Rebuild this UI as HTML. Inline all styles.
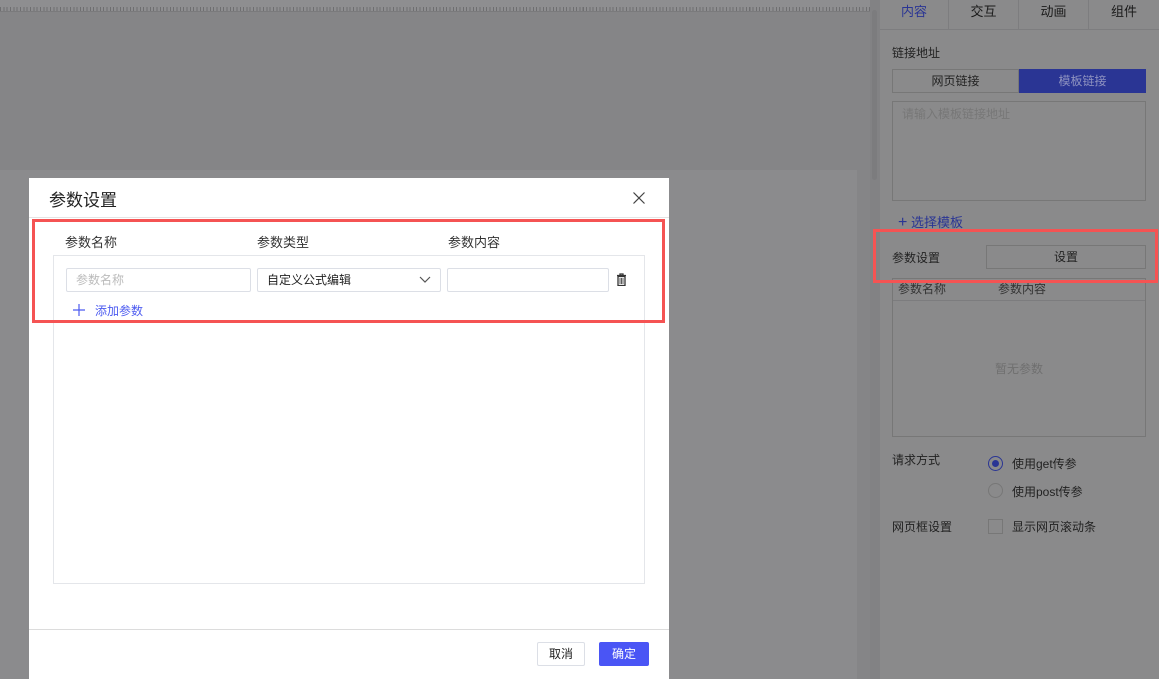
<!DOCTYPE html>
<html><head><meta charset="utf-8"><style>
*{box-sizing:border-box;margin:0;padding:0}
body{width:1159px;height:679px;overflow:hidden;background:#858587;font-family:"Liberation Sans","Noto Sans CJK SC",sans-serif;position:relative;font-size:12px}
.abs{position:absolute}
.ruler{left:0;top:0;width:870px;height:12px;background:#8e8e90;border-bottom:1px solid #7a7a7c;background-image:repeating-linear-gradient(90deg,#6e6e70 0 1px,transparent 1px 3.33px);background-size:100% 5px;background-repeat:repeat-x;background-position:0 7px}
.canvas{left:0;top:170px;width:857px;height:509px;background:#8b8b8d}
.sb{left:870px;top:0;width:10px;height:679px;background:#828284}
.panel{left:880px;top:0;width:279px;height:679px;background:#8a8a8b;color:#222}
.tab{top:0;height:30px;line-height:24px;text-align:center;font-size:13px;color:#1a1a1a;border-right:1px solid #7d7d7f;border-bottom:1px solid #7d7d7f}
.dlg{left:29px;top:178px;width:640px;height:501px;background:#fff}
.inp{height:24px;border:1px solid #dcdfe6;border-radius:2px;top:268px;font-size:12px;line-height:22px;padding-left:9px}
</style></head><body>
<div class="abs ruler"></div>
<div class="abs canvas"></div>
<div class="abs sb"><div class="abs" style="left:2px;top:10px;width:5px;height:170px;background:#7c7c7e;border-radius:3px"></div></div>
<div class="abs panel">
 <div class="abs tab" style="left:0;width:69px;color:#2a3594">内容</div>
 <div class="abs tab" style="left:69px;width:70px">交互</div>
 <div class="abs tab" style="left:139px;width:70px">动画</div>
 <div class="abs tab" style="left:209px;width:70px;border-right:none">组件</div>
 <div class="abs" style="left:12px;top:44px">链接地址</div>
 <div class="abs" style="left:12px;top:69px;width:127px;height:24px;border:1px solid #777;text-align:center;line-height:22px">网页链接</div>
 <div class="abs" style="left:139px;top:69px;width:127px;height:24px;background:#2a3594;color:#8f93c0;text-align:center;line-height:24px">模板链接</div>
 <div class="abs" style="left:12px;top:101px;width:254px;height:100px;border:1px solid #777;padding:3px 9px;color:#777">请输入模板链接地址</div>
 <div class="abs" style="left:18px;top:212px;color:#2a3594;font-size:13px"><span style="font-size:16px">+</span> 选择模板</div>
 <div class="abs" style="left:12px;top:249px">参数设置</div>
 <div class="abs" style="left:106px;top:245px;width:160px;height:24px;border:1px solid #777;text-align:center;line-height:22px">设置</div>
 <div class="abs" style="left:12px;top:278px;width:254px;height:159px;border:1px solid #777"><div style="height:22px;border-bottom:1px solid #7c7c7e;padding-left:5px;line-height:20px;color:#333">参数名称<span style="margin-left:52px">参数内容</span></div><div style="text-align:center;margin-top:59px;color:#6f6f6f">暂无参数</div></div>
 <div class="abs" style="left:12px;top:451px">请求方式</div>
 <div class="abs" style="left:108px;top:456px;width:15px;height:15px;border:1px solid #2a3594;border-radius:50%"><div style="margin:3px;width:7px;height:7px;border-radius:50%;background:#2a3594"></div></div>
 <div class="abs" style="left:132px;top:455px">使用get传参</div>
 <div class="abs" style="left:108px;top:483px;width:15px;height:15px;border:1px solid #777;border-radius:50%"></div>
 <div class="abs" style="left:132px;top:483px">使用post传参</div>
 <div class="abs" style="left:12px;top:518px">网页框设置</div>
 <div class="abs" style="left:108px;top:519px;width:15px;height:15px;border:1px solid #777"></div>
 <div class="abs" style="left:132px;top:518px">显示网页滚动条</div>
</div>
<div class="abs" style="left:873px;top:229px;width:285px;height:54px;border:3px solid #f55353"></div>
<div class="abs dlg">
 <div class="abs" style="left:20px;top:8px;font-size:17px;color:#222">参数设置</div>
 <svg class="abs" style="left:604px;top:14px" width="12" height="12" viewBox="0 0 12 12"><path d="M0.5 0.5l11 11M11.5 0.5l-11 11" stroke="#444" stroke-width="1.2"/></svg>
 <div class="abs" style="left:0;top:39px;width:640px;height:1px;background:#e4e4e4"></div>
 <div class="abs" style="left:36px;top:54px;font-size:13px;color:#333">参数名称</div>
 <div class="abs" style="left:228px;top:54px;font-size:13px;color:#333">参数类型</div>
 <div class="abs" style="left:419px;top:54px;font-size:13px;color:#333">参数内容</div>
 <div class="abs" style="left:24px;top:77px;width:592px;height:329px;border:1px solid #e4e6ea"></div>
 <div class="abs inp" style="left:37px;width:185px;top:90px;color:#bbb">参数名称</div>
 <div class="abs inp" style="left:228px;width:184px;top:90px;color:#222">自定义公式编辑<svg class="abs" style="right:9px;top:7px" width="12" height="8" viewBox="0 0 12 8"><path d="M1 1l5 5 5-5" fill="none" stroke="#555" stroke-width="1.2"/></svg></div>
 <div class="abs inp" style="left:418px;width:162px;top:90px"></div>
 <svg class="abs" style="left:587px;top:95px" width="11" height="13" viewBox="0 0 11 13"><path d="M1 2.5h9M4 2.5V1h3v1.5M2 3.5h7v9H2z" fill="none" stroke="#333" stroke-width="1.3"/><path d="M4 5v6M5.5 5v6M7 5v6" stroke="#333" stroke-width="0.8"/></svg>
 <svg class="abs" style="left:44px;top:126px" width="12" height="12" viewBox="0 0 12 12"><path d="M6 0v12M0 6h12" stroke="#4c5bf0" stroke-width="1.2"/></svg>
 <div class="abs" style="left:66px;top:124px;color:#4c5bf0;font-size:12px">添加参数</div>
 <div class="abs" style="left:0;top:451px;width:640px;height:1px;background:#dcdcdc"></div>
 <div class="abs" style="left:508px;top:464px;width:48px;height:24px;border:1px solid #dcdfe6;border-radius:2px;text-align:center;line-height:22px;color:#222">取消</div>
 <div class="abs" style="left:570px;top:464px;width:50px;height:24px;background:#4a55f5;border-radius:2px;text-align:center;line-height:24px;color:#fff">确定</div>
</div>
<div class="abs" style="left:32px;top:219px;width:633px;height:104px;border:3px solid #f55353"></div>
</body></html>
